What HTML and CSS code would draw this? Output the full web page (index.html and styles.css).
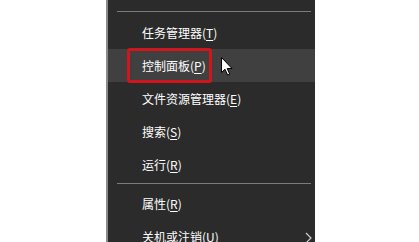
FILE: index.html
```html
<!DOCTYPE html>
<html lang="zh-CN">
<head>
<meta charset="utf-8">
<link rel="stylesheet" href="styles.css">
</head>
<body>
<div class="menu">
  <div class="sep sep-top"></div>
  <div class="item">任务管理器(<u>T</u>)</div>
  <div class="item active">控制面板(<u>P</u>)
    <span class="mark"></span>
    <svg class="cursor" width="12" height="19" viewBox="0 0 12 19"><path d="M0.5 0.5 L0.5 15.5 L4 12.2 L6.6 18 L8.7 17.1 L6.2 11.5 L11 11.5 Z" fill="#fff" stroke="#000" stroke-width="1"/></svg>
  </div>
  <div class="item">文件资源管理器(<u>E</u>)</div>
  <div class="item">搜索(<u>S</u>)</div>
  <div class="item">运行(<u>R</u>)</div>
  <div class="sep sep-mid"></div>
  <div class="item">属性(<u>R</u>)</div>
  <div class="item">关机或注销(<u>U</u>)
    <svg class="chev" width="7" height="12" viewBox="0 0 7 12"><path d="M1 1 L6 6 L1 11" fill="none" stroke="#cfcfcf" stroke-width="1.2"/></svg>
  </div>
</div>
</body>
</html>
```
FILE: styles.css
```css
html, body {
  margin: 0;
  padding: 0;
  background: #ffffff;
}
body {
  width: 419px;
  height: 242px;
  overflow: hidden;
}
.menu {
  margin-left: 106px;
  width: 207px;
  height: 242px;
  border-left: 2px solid #8a8a8a;
  background: #2b2b2b;
  padding-top: 11px;
  box-sizing: content-box;
  display: flex;
  flex-direction: column;
  font-family: "Noto Sans CJK SC", "Microsoft YaHei", sans-serif;
  font-size: 12px;
  color: #ffffff;
}
.sep {
  height: 1px;
  background: #7b7b7b;
  margin-left: 9px;
  margin-right: 4px;
  flex: none;
}
.sep-top { margin-bottom: 4px; }
.sep-mid { margin-top: 2px; margin-bottom: 3px; }
.item {
  position: relative;
  height: 33px;
  flex: none;
  display: flex;
  align-items: center;
  padding-left: 34px;
  white-space: nowrap;
}
.item u {
  text-decoration: underline;
  text-underline-offset: 2px;
}
.active {
  background: #404040;
}
.mark {
  position: absolute;
  left: 19px;
  top: -1px;
  width: 79px;
  height: 29px;
  border: 3px solid #d0161c;
  border-radius: 3px;
}
.cursor {
  position: absolute;
  left: 113px;
  top: 8px;
}
.chev {
  position: absolute;
  right: 3px;
  top: 12px;
}
```
